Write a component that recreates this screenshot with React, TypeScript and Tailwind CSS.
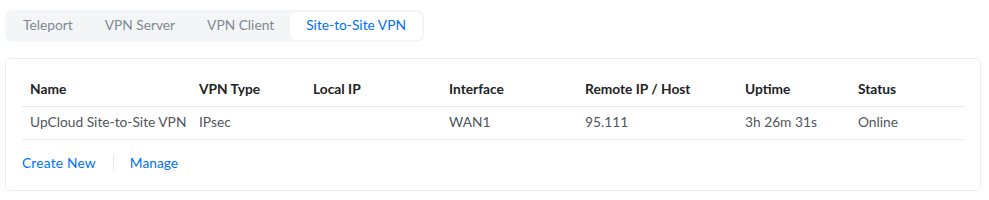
import React from "react";

const cols = [
  { label: "Name", w: "w-[169px]" },
  { label: "VPN Type", w: "w-[114px]" },
  { label: "Local IP", w: "w-[136px]" },
  { label: "Interface", w: "w-[136px]" },
  { label: "Remote IP / Host", w: "w-[160px]" },
  { label: "Uptime", w: "w-[113px]" },
  { label: "Status", w: "flex-1" },
];

const row = ["UpCloud Site-to-Site VPN", "IPsec", "", "WAN1", "95.111", "3h 26m 31s", "Online"];

export default function App() {
  return (
    <div className="w-[989px] h-[200px] bg-white font-['Lato',sans-serif] text-[13.75px]">
      <div className="pt-[10px] pl-[5px]">
        <div className="inline-flex h-[32px] items-center rounded-[7px] bg-[#f4f5f6] p-[2px]">
          <div className="px-[16px] pb-[2px] text-[#808893]">Teleport</div>
          <div className="px-[16px] pb-[2px] text-[#808893]">VPN Server</div>
          <div className="px-[16px] pb-[2px] text-[#808893]">VPN Client</div>
          <div className="flex h-[28px] items-center justify-center rounded-[6px] bg-white px-[16px] pb-[2px] text-[#006fff]">
            Site-to-Site VPN
          </div>
        </div>
      </div>
      <div className="mx-[5px] mt-[16px] h-[133px] w-[976px] rounded-[5px] border border-[#ebedf0] px-[16px] pt-[16px]">
        <div className="flex h-[32px] items-center border-b border-[#e6e8eb] pb-[2px] font-bold text-[#212327]">
          {cols.map((c) => (
            <div key={c.label} className={`${c.w} pl-[8px]`}>
              {c.label}
            </div>
          ))}
        </div>
        <div className="flex h-[33px] items-center border-b border-[#e6e8eb] pb-[2px] text-[#50565e]">
          {cols.map((c, i) => (
            <div key={c.label} className={`${c.w} pl-[8px]`}>
              {row[i]}
            </div>
          ))}
        </div>
        <div className="flex h-[48px] items-center pb-[2px] text-[#006fff]">
          <span className="tracking-[0.2px]">Create New</span>
          <span className="ml-[17px] mr-[16px] h-[16px] w-px bg-[#e6e8eb]" />
          <span>Manage</span>
        </div>
      </div>
    </div>
  );
}
